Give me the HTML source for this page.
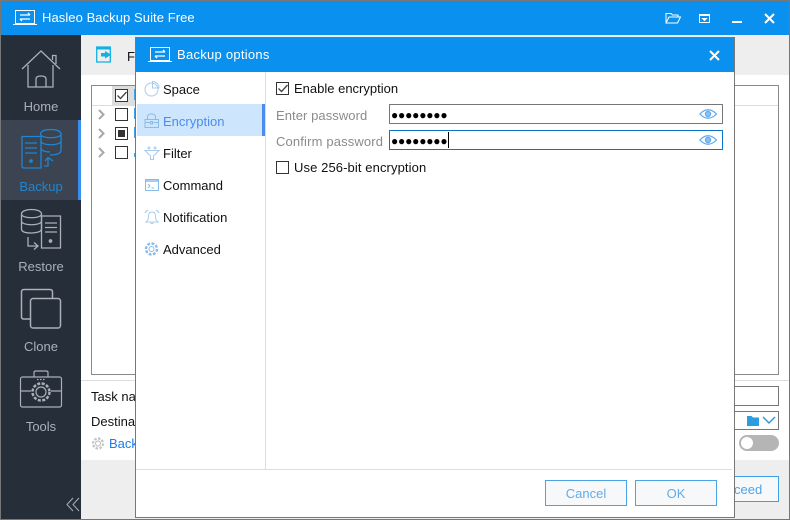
<!DOCTYPE html>
<html><head><meta charset="utf-8"><style>
html,body{margin:0;padding:0;background:#fff}
#r{position:relative;width:790px;height:520px;overflow:hidden;font-family:"Liberation Sans",sans-serif;font-size:13px;color:#111;background:#fff}
#r div,#r svg,#r span.a{position:absolute}
.t{white-space:nowrap;line-height:16px;letter-spacing:0}
.nav{left:1px;width:80px;text-align:center;color:#a9b0b8;line-height:16px;letter-spacing:0}
.cb{width:11px;height:11px;border:1px solid #333;background:#fff}
.g{color:#8b8b8b}
svg{fill:none}
</style></head><body><div id="r">
<div style="left:0;top:0;width:790px;height:520px;box-sizing:border-box;border:1px solid #777"></div>
<div style="left:1px;top:1px;width:788px;height:34px;background:#0a90ee"></div>
<svg style="left:12px;top:10px" width="26" height="16" stroke="#fff" stroke-width="1"><path d="M3.5 .5H22.5V13.5H3.5ZM1 14.5H25"/><path d="M8 5H18M16 3L18 5M8 9H18M8 9L10 11" stroke-width="1.3"/></svg>
<div class="t" style="left:42px;top:10px;color:#fff;font-size:13px;letter-spacing:.07px">Hasleo Backup Suite Free</div>
<svg style="left:665px;top:12px" width="17" height="12" stroke="#fff" stroke-width="1"><path d="M1 10V1.500H6L7.500 3H13V5M1 11L4 5H15.500L12.500 11Z"/></svg>
<svg style="left:699px;top:14px" width="12" height="10" stroke="#fff"><path d="M.5 .5H10.500V8.500H.5Z"/><path d="M.5 1.500H10.500"/><path d="M3.500 4.500H7.500L5.500 6.500Z" fill="#fff"/></svg>
<div style="left:732px;top:21px;width:10px;height:2px;background:#fff"></div>
<svg style="left:764px;top:13px" width="11" height="11" stroke="#fff" stroke-width="2"><path d="M1 1L10 10M10 1L1 10"/></svg>

<div style="left:1px;top:35px;width:80px;height:484px;background:#262e39"></div>
<div style="left:1px;top:120px;width:80px;height:80px;background:#3b4450"></div>
<div style="left:78px;top:120px;width:3px;height:80px;background:#3a8ef0"></div>
<svg style="left:21px;top:50px" width="40" height="40" stroke="#a9b0b8" stroke-width="1.300"><path d="M1 19L20 1L39 19M7 15V37H32V15M31.500 10V5.500H35V14"/><path d="M15 37V29Q15 26 20 26Q25 26 25 29V37"/></svg>
<div class="nav" style="top:99px">Home</div>
<svg style="left:20px;top:128px" width="42" height="42" stroke="#2185d0" stroke-width="1.300"><path d="M2 8.500H21V40H4Q2 40 2 38Z"/><path d="M5 15H17M5 20H17M5 25H17"/><circle cx="11" cy="33" r="1.200" fill="#2185d0"/><path d="M20.500 6C20.500 0 41 0 41 6V22C41 27 32 27 30 27M20.500 6C20.500 11 41 11 41 6M21 13C21 18 41 18 41 13M21 20C21 23 26 24 30 24"/><path d="M24 38H28V30M25 33L28 29.500L33 33"/></svg>
<div class="nav" style="top:179px;color:#2185d0">Backup</div>
<svg style="left:20px;top:208px" width="42" height="42" stroke="#a9b0b8" stroke-width="1.300"><path d="M21.500 8H40.500V40H21.500Z" /><path d="M25 15H37M25 19.500H37M25 24H37"/><circle cx="30.500" cy="33" r="1.200" fill="#a9b0b8"/><path d="M1.500 6C1.500 0 21.500 0 21.500 6V21C21.500 25 11 25 11 25C3 25 1.500 23 1.500 21ZM1.500 6C1.500 11 21.500 11 21.500 6M1.500 13C1.500 18 21.500 18 21.500 13"/><path d="M8 29V38H17M14 34.500L18 38L14 41.500"/></svg>
<div class="nav" style="top:259px">Restore</div>
<svg style="left:20px;top:288px" width="42" height="42" stroke="#a9b0b8" stroke-width="1.500"><path d="M10 31H4Q1.500 31 1.500 29V4Q1.500 1.500 4 1.500H30Q32.500 1.500 32.500 4V10"/><rect x="10.500" y="10.500" width="30" height="29.500" rx="2.500"/></svg>
<div class="nav" style="top:339px">Clone</div>
<svg style="left:19px;top:369px" width="44" height="42" stroke="#a9b0b8" stroke-width="1.200"><rect x="1.500" y="8" width="41" height="30" rx="2"/><path d="M15 8V3.500Q15 2 17 2H27Q29 2 29 3.500V8M1.500 22H12M32 22H42.500"/><circle cx="22" cy="23" r="5"/><circle cx="22" cy="23" r="8.500" stroke-width="2.500" stroke-dasharray="3 1.500"/><path d="M18 10.500H26" stroke-dasharray="1.500 1.500"/></svg>
<div class="nav" style="top:419px">Tools</div>
<svg style="left:66px;top:497px" width="14" height="15" stroke="#a9b0b8"><path d="M7 1L1 7.500L7 14M13 1L7 7.500L13 14"/></svg>

<div style="left:81px;top:35px;width:708px;height:40px;background:#eee"></div>
<svg style="left:96px;top:46px" width="16" height="18" stroke="#13b0e2" stroke-width="1.300"><path d="M.7 1H14.300V16H.7Z"/><path d="M.7 2.500H14.300" stroke-width="2"/><path d="M5 7H9V5L15 8.800L9 12.500V10.500H5Z" fill="#13b0e2" stroke="none"/></svg>
<div class="t" style="left:127px;top:49px">F</div>
<div style="left:91px;top:85px;width:688px;height:290px;box-sizing:border-box;border:1px solid #8a8a8a;background:#fff"></div>
<div style="left:92px;top:86px;width:686px;height:19px;background:#fff;border-bottom:1px solid #ddd"></div>
<div style="left:112px;top:86px;width:23px;height:19px;background:#ddd"></div>
<div class="cb" style="left:115px;top:89px"></div>
<svg style="left:116px;top:91px" width="12" height="10" stroke="#444" stroke-width="1.300"><path d="M1.500 4.500L4.500 7.500L10.500 1"/></svg>
<div class="cb" style="left:115px;top:108px"></div>
<div class="cb" style="left:115px;top:127px"></div>
<div style="left:118px;top:130px;width:7px;height:7px;background:#333"></div>
<div class="cb" style="left:115px;top:146px"></div>
<svg style="left:98px;top:109px" width="8" height="52" stroke="#a8a8a8" stroke-width="2"><path d="M1 1L5.500 5.500L1 10M1 20L5.500 24.500L1 29M1 39L5.500 43.500L1 48"/></svg>
<div style="left:134px;top:89px;width:2px;height:11px;background:#4aa3e0"></div>
<div style="left:134px;top:108px;width:2px;height:11px;background:#4aa3e0"></div>
<div style="left:134px;top:127px;width:2px;height:11px;background:#4aa3e0"></div>
<div style="left:134px;top:153px;width:2px;height:4px;background:#4aa3e0"></div>

<div style="left:81px;top:380px;width:708px;height:1px;background:#ddd"></div>
<div class="t" style="left:91px;top:389px">Task name</div>
<div class="t" style="left:91px;top:414px">Destination</div>
<svg style="left:91px;top:436px" width="14" height="15" stroke="#c4c4c4" stroke-width="1.200"><circle cx="7" cy="7.500" r="2.500"/><circle cx="7" cy="7.500" r="5" stroke-width="2.200" stroke-dasharray="2.500 1.400"/></svg>
<div class="t" style="left:109px;top:436px;color:#1e7be6">Back</div>
<div style="left:734px;top:386px;width:45px;height:20px;box-sizing:border-box;border:1px solid #777;border-left:0"></div>
<div style="left:734px;top:411px;width:45px;height:19px;box-sizing:border-box;border:1px solid #777;border-left:0"></div>
<svg style="left:747px;top:414px" width="30" height="13"><path d="M0 2H4.500L6 3.500H12V12H0Z" fill="#2c9be0"/><path d="M16 3L22 9L28 3" stroke="#2c9be0" stroke-width="1.500"/></svg>
<div style="left:739px;top:435px;width:40px;height:16px;border-radius:8px;background:#b5b5b5"></div>
<div style="left:741px;top:437px;width:12px;height:12px;border-radius:6px;background:#fff"></div>
<div style="left:81px;top:460px;width:708px;height:59px;background:#eee"></div>
<div style="left:734px;top:476px;width:45px;height:26px;box-sizing:border-box;border:1px solid #3ea0e6;border-left:0;background:#f7f8fa"></div>
<div class="t" style="left:734px;top:482px;color:#4ea4e8">ceed</div>

<div style="left:135px;top:37px;width:600px;height:481px;box-sizing:border-box;border:1px solid #777;background:#fff"></div>
<div style="left:136px;top:38px;width:598px;height:34px;background:#0a90ee"></div>
<svg style="left:147px;top:47px" width="26" height="16" stroke="#fff"><path d="M3.500 .5H22.500V13.500H3.500ZM1 14.500H25"/><path d="M8 5H18M16 3L18 5M8 9H18M8 9L10 11" stroke-width="1.300"/></svg>
<div class="t" style="left:177px;top:47px;color:#fff;letter-spacing:.27px">Backup options</div>
<svg style="left:709px;top:50px" width="11" height="11" stroke="#fff" stroke-width="2"><path d="M1 1L10 10M10 1L1 10"/></svg>

<div style="left:265px;top:72px;width:1px;height:397px;background:#ddd"></div>
<div style="left:137px;top:104px;width:128px;height:32px;background:#cde5fd"></div>
<div style="left:262px;top:104px;width:3px;height:32px;background:#4a8cf0"></div>
<svg style="left:144px;top:81px" width="16" height="16" stroke="#a6cdee"><circle cx="7.500" cy="8.500" r="6.500"/><path d="M8.500 .5A6.500 6.500 0 0 1 15 7H8.500Z"/></svg>
<div class="t" style="left:163px;top:82px">Space</div>
<svg style="left:144px;top:113px" width="16" height="16" stroke="#89bce8"><path d="M1 6.500H14.500V14.500H1ZM3.500 6.500V4Q3.500 1 7.500 1Q11.500 1 11.500 4V6.500"/><path d="M1 9.500H6M9.500 9.500H14.500"/><path d="M6.500 8.500H8.500V11H6.500Z"/></svg>
<div class="t" style="left:163px;top:114px;color:#4a8cf0">Encryption</div>
<svg style="left:144px;top:145px" width="16" height="16" stroke="#a6cdee"><path d="M1 5.500H15L9.500 11V14.500H6.500V11Z"/><path d="M5 1V4M3.500 2.500L5 4L6.500 2.500M11 1V4M9.500 2.500L11 4L12.500 2.500"/></svg>
<div class="t" style="left:163px;top:146px">Filter</div>
<svg style="left:145px;top:179px" width="15" height="13" stroke="#89bce8"><path d="M.5 .5H13.500V11.500H.5Z"/><path d="M.5 2H13.500" stroke-width="1.500"/><path d="M3 5L5 7L3 9M6.500 9H9"/></svg>
<div class="t" style="left:163px;top:178px">Command</div>
<svg style="left:144px;top:209px" width="16" height="16" stroke="#a6cdee"><path d="M2 13Q4.500 11 4.500 7Q4.500 3 8 3Q11.500 3 11.500 7Q11.500 11 14 13ZM6.500 14.500H9.500M1 4Q2 2 4 1M15 4Q14 2 12 1"/></svg>
<div class="t" style="left:163px;top:210px">Notification</div>
<svg style="left:144px;top:241px" width="16" height="16" stroke="#89bce8"><circle cx="7.500" cy="8" r="2.500"/><circle cx="7.500" cy="8" r="5.500" stroke-width="2.400" stroke-dasharray="2.800 1.500"/></svg>
<div class="t" style="left:163px;top:242px">Advanced</div>

<div class="cb" style="left:276px;top:82px"></div>
<svg style="left:277px;top:84px" width="12" height="10" stroke="#444" stroke-width="1.300"><path d="M1.500 4.500L4.500 7.500L10.500 1"/></svg>
<div class="t" style="left:294px;top:81px">Enable encryption</div>
<div class="t g" style="left:276px;top:108px;letter-spacing:.07px">Enter password</div>
<div style="left:389px;top:104px;width:334px;height:20px;box-sizing:border-box;border:1px solid #777"></div>
<div class="t g" style="left:276px;top:134px;letter-spacing:.15px">Confirm password</div>
<div style="left:389px;top:130px;width:334px;height:20px;box-sizing:border-box;border:1px solid #0b74c8"></div>
<div style="left:391px;top:107px;color:#000;font-size:12px;line-height:16px;letter-spacing:-.2px;white-space:nowrap">●●●●●●●●</div>
<div style="left:391px;top:133px;color:#000;font-size:12px;line-height:16px;letter-spacing:-.2px;white-space:nowrap">●●●●●●●●</div>
<div style="left:448px;top:132px;width:1px;height:16px;background:#000"></div>
<svg style="left:699px;top:108px" width="19" height="12" stroke="#5aa9f0" stroke-width="1.200"><path d="M.8 6Q9 -2.500 17.500 6Q9 14.500 .8 6Z"/><circle cx="9" cy="6" r="2.600" fill="#8fbff0"/></svg>
<svg style="left:699px;top:134px" width="19" height="12" stroke="#5aa9f0" stroke-width="1.200"><path d="M.8 6Q9 -2.500 17.500 6Q9 14.500 .8 6Z"/><circle cx="9" cy="6" r="2.600" fill="#8fbff0"/></svg>
<div class="cb" style="left:276px;top:161px"></div>
<div class="t" style="left:294px;top:160px;letter-spacing:.1px">Use 256-bit encryption</div>

<div style="left:136px;top:469px;width:596px;height:1px;background:#ddd"></div>
<div style="left:545px;top:480px;width:82px;height:26px;box-sizing:border-box;border:1px solid #4ba3e3;background:#f7f8fa;color:#62ace8;text-align:center;line-height:26px">Cancel</div>
<div style="left:635px;top:480px;width:82px;height:26px;box-sizing:border-box;border:1px solid #4ba3e3;background:#f7f8fa;color:#62ace8;text-align:center;line-height:26px">OK</div>
</div></body></html>
